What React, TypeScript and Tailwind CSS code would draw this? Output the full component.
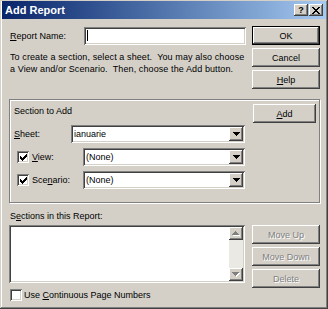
import React from 'react';

// classic 3D edges
const raised =
  'bg-[#d4d0c8] shadow-[inset_-1px_-1px_0_#404040,inset_1px_1px_0_#fff,inset_-2px_-2px_0_#808080,inset_2px_2px_0_#d4d0c8]';
const sunken =
  'bg-white shadow-[inset_1px_1px_0_#808080,inset_-1px_-1px_0_#fff,inset_2px_2px_0_#404040,inset_-2px_-2px_0_#d4d0c8]';

function Pix({ rows, color, x = 0, y = 0 }: { rows: string[]; color: string; x?: number; y?: number }) {
  return (
    <>
      {rows.flatMap((r, j) =>
        r.split('').map((c, i) =>
          c === '1' ? <rect key={`${i}-${j}`} x={x + i} y={y + j} width={1} height={1} fill={color} /> : null
        )
      )}
    </>
  );
}

const DOWN = ['1111111', '0111110', '0011100', '0001000'];
const UP = ['0001000', '0011100', '0111110', '1111111'];
const CHECK = ['0000001', '0000011', '1000111', '1101110', '1111100', '0111000', '0010000'];
const CLOSE = ['11000011', '01100110', '00111100', '00011000', '00111100', '01100110', '11000011'];

function Btn({
  children,
  isDefault = false,
  disabled = false,
  className = '',
}: {
  children: React.ReactNode;
  isDefault?: boolean;
  disabled?: boolean;
  className?: string;
}) {
  return (
    <div
      className={`h-[19px] flex items-center justify-center ${
        isDefault
          ? 'bg-[#d4d0c8] border border-black shadow-[inset_-1px_-1px_0_#404040,inset_1px_1px_0_#fff,inset_-2px_-2px_0_#808080]'
          : raised
      } ${disabled ? 'text-[#808080] [text-shadow:1px_1px_0_#fff]' : 'text-black'} ${className}`}
    >
      {children}
    </div>
  );
}

function Combo({ value, width }: { value: string; width: string }) {
  return (
    <div className={`${sunken} ${width} h-[18px] flex items-center p-[2px]`}>
      <span className="flex-1 pl-px">{value}</span>
      <div className={`${raised} w-[14px] h-full flex items-center justify-center`}>
        <svg width="7" height="4" shapeRendering="crispEdges">
          <Pix rows={DOWN} color="#000" />
        </svg>
      </div>
    </div>
  );
}

function Check({ checked }: { checked: boolean }) {
  return (
    <div className={`${sunken} w-[12px] h-[12px] flex items-center justify-center shrink-0`}>
      {checked && (
        <svg width="7" height="7" shapeRendering="crispEdges">
          <Pix rows={CHECK} color="#000" />
        </svg>
      )}
    </div>
  );
}

function ScrollArrow({ rows }: { rows: string[] }) {
  return (
    <div className={`${raised} w-[14px] h-[13px] flex items-center justify-center`}>
      <svg width="8" height="5" shapeRendering="crispEdges">
        <Pix rows={rows} color="#fff" x={1} y={1} />
        <Pix rows={rows} color="#808080" />
      </svg>
    </div>
  );
}

export default function App() {
  return (
    <div className="w-[328px] h-[309px] bg-[#d4d0c8] text-black text-[9px] leading-[12px] font-['Liberation_Sans',Arial,sans-serif] overflow-hidden shadow-[inset_-1px_-1px_0_#404040,inset_1px_1px_0_#d4d0c8,inset_-2px_-2px_0_#808080,inset_2px_2px_0_#fff]">
      {/* title bar */}
      <div className="mx-[2px] mt-px h-[18px] flex items-center pl-[3px] pr-[3px] bg-linear-to-r from-[#0a246a] to-[#a6caf0]">
        <span className="flex-1 text-white font-bold text-[11px]">Add Report</span>
        <div className="flex gap-px">
          <div className={`${raised} w-[14px] h-[12px] flex items-center justify-center font-bold text-[9px] leading-none`}>?</div>
          <div className={`${raised} w-[14px] h-[12px] flex items-center justify-center`}>
            <svg width="8" height="7" shapeRendering="crispEdges">
              <Pix rows={CLOSE} color="#000" />
            </svg>
          </div>
        </div>
      </div>

      <div className="pl-[9px] pt-[7px]">
        {/* name + instructions / OK Cancel Help */}
        <div className="flex gap-[6px]">
          <div className="w-[237px]">
            <div className="h-[19px] flex items-center justify-between">
              <span className="pl-px">
                <span className="underline">R</span>eport Name:
              </span>
              <div className={`${sunken} w-[162px] h-[18px] flex items-center pl-[3px]`}>
                <div className="w-px h-[11px] bg-black" />
              </div>
            </div>
            <p className="mt-[6px] pl-px whitespace-pre tracking-[0.1px]">
              {'To create a section, select a sheet.  You may also choose\na View and/or Scenario.  Then, choose the Add button.'}
            </p>
          </div>
          <div className="w-[68px] flex flex-col gap-[3px]">
            <Btn isDefault>OK</Btn>
            <Btn>Cancel</Btn>
            <Btn>
              <span className="underline">H</span>elp
            </Btn>
          </div>
        </div>

        {/* section to add */}
        <div className="mt-[10px] w-[311px] h-[104px] border border-[#808080] shadow-[inset_1px_1px_0_#fff,1px_1px_0_#fff] flex justify-between">
          <div className="pl-[4px] pt-[5px]">
            <div>Section to Add</div>
            <div className="mt-[8px] flex items-center">
              <span className="w-[57px]">
                <span className="underline">S</span>heet:
              </span>
              <Combo value="ianuarie" width="w-[174px]" />
            </div>
            <div className="mt-[5px] flex items-center">
              <div className="w-[69px] flex items-center pl-[3px] gap-[3px]">
                <Check checked />
                <span>
                  <span className="underline">V</span>iew:
                </span>
              </div>
              <Combo value="(None)" width="w-[162px]" />
            </div>
            <div className="mt-[5px] flex items-center">
              <div className="w-[69px] flex items-center pl-[3px] gap-[3px]">
                <Check checked />
                <span>
                  Sce<span className="underline">n</span>ario:
                </span>
              </div>
              <Combo value="(None)" width="w-[162px]" />
            </div>
          </div>
          <div className="pt-[4px] pr-[3px]">
            <Btn className="w-[63px]">
              <span className="underline">A</span>dd
            </Btn>
          </div>
        </div>

        {/* sections in report */}
        <div className="mt-[7px] pl-px">
          S<span className="underline">e</span>ctions in this Report:
        </div>
        <div className="mt-[3px] flex gap-[6px]">
          <div className="w-[237px]">
            <div className={`${sunken} w-[236px] h-[58px] p-[2px] flex justify-end`}>
              <div className="w-[14px] h-full flex flex-col bg-[#ebe9e4]">
                <ScrollArrow rows={UP} />
                <div className="flex-1" />
                <ScrollArrow rows={DOWN} />
              </div>
            </div>
          </div>
          <div className="w-[68px] flex flex-col gap-[3px]">
            <Btn disabled>Move Up</Btn>
            <Btn disabled>Move Down</Btn>
            <Btn disabled>Delete</Btn>
          </div>
        </div>

        <div className="mt-px h-[12px] flex items-center pl-px gap-[2px]">
          <Check checked={false} />
          <span>
            Use <span className="underline">C</span>ontinuous Page Numbers
          </span>
        </div>
      </div>
    </div>
  );
}
